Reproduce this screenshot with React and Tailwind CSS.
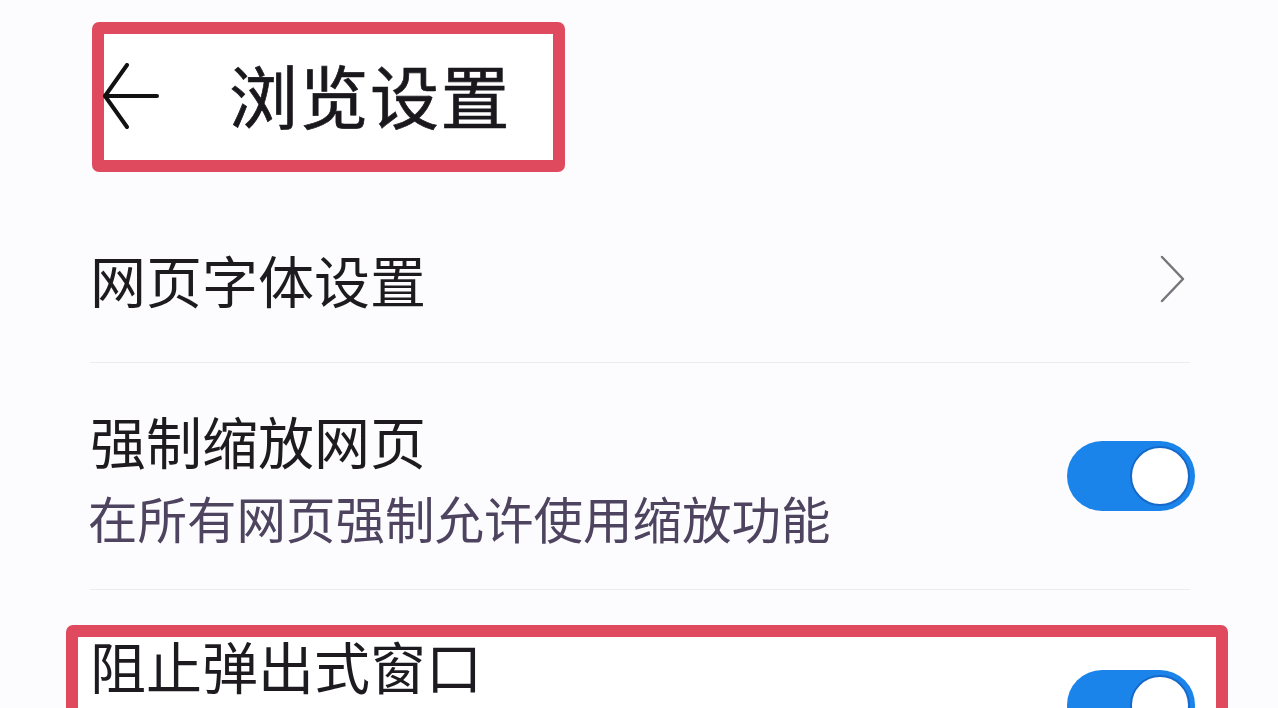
export default function App() {
  const font = { fontFamily: '"Noto Sans CJK SC", "Noto Sans", sans-serif' };

  return (
    <div
      className="w-[1278px] h-[708px] overflow-hidden bg-[#fcfcfe] text-[#1d1b20]"
      style={font}
    >
      {/* Header (highlighted) */}
      <div className="pt-[22px] pl-[92px]">
        <div className="w-[473px] h-[150px] border-[12px] border-[#e04a5f] rounded-[7px] bg-white flex items-center">
          <svg width="56" height="66" viewBox="0 0 56 66" className="shrink-0 -ml-px -mt-[3px]">
            <polyline
              points="24,2 2,33 24,64"
              fill="none"
              stroke="#111"
              strokeWidth="4"
              strokeLinecap="round"
              strokeLinejoin="round"
            />
            <line x1="2" y1="33" x2="54" y2="33" stroke="#111" strokeWidth="4" strokeLinecap="round" />
          </svg>
          <h1 className="ml-[70px] -mt-[6px] text-[69px] leading-none font-normal tracking-[1.5px] text-[#1a181c] [-webkit-text-stroke:0.7px_#1a181c]">
            浏览设置
          </h1>
        </div>
      </div>

      {/* Settings list */}
      <div className="ml-[90px] w-[1100px] mt-[31px]">
        <div className="h-[160px] pb-[8px] flex items-center justify-between border-b border-[#ececf0]">
          <span className="text-[56px] leading-none">网页字体设置</span>
          <svg width="26" height="48" viewBox="0 0 26 48" className="mr-[4px]">
            <polyline
              points="2,2 23,24 2,46"
              fill="none"
              stroke="#77757c"
              strokeWidth="2.5"
              strokeLinecap="round"
              strokeLinejoin="round"
            />
          </svg>
        </div>

        <div className="h-[227px] pt-[40px] pb-[39px] flex items-center justify-between border-b border-[#ececf0]">
          <div className="flex flex-col">
            <span className="text-[56px] leading-[72px]">强制缩放网页</span>
            <span className="mt-[10px] text-[49.5px] leading-[64px] text-[#4e4460] -ml-[2px]">
              在所有网页强制允许使用缩放功能
            </span>
          </div>
          <Toggle className="-mr-[5px] -mt-[2px]" />
        </div>
      </div>

      {/* Highlighted row */}
      <div className="ml-[66px] mt-[35px] w-[1162px] h-[200px] border-[12px] border-[#e04a5f] rounded-[7px] bg-white pl-[12px] pr-[21px] flex items-start justify-between">
        <span className="text-[56px] leading-[56px]">阻止弹出式窗口</span>
        <Toggle className="mt-[33px]" />
      </div>
    </div>
  );
}

function Toggle({ className = "" }) {
  return (
    <div className={`w-[128px] h-[70px] rounded-full bg-[#1a84ea] flex items-center justify-end pr-[5px] shrink-0 ${className}`}>
      <div className="w-[60px] h-[60px] rounded-full bg-white border-2 border-[#1669c8]" />
    </div>
  );
}
